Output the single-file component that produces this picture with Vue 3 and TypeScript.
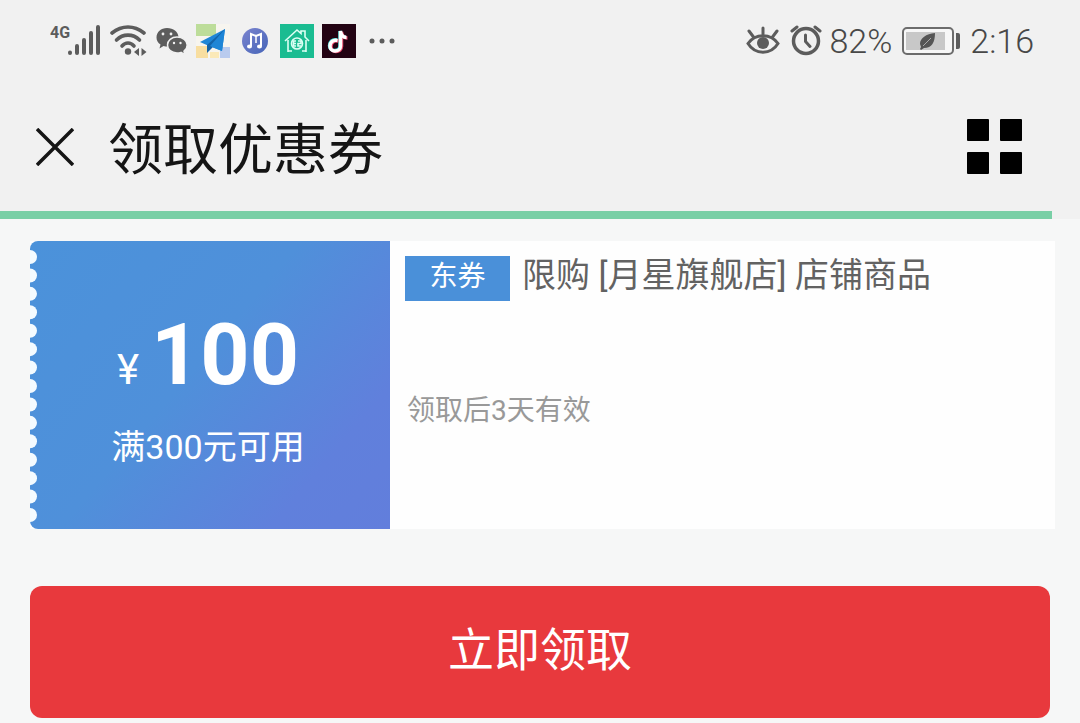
<script setup lang="ts">
interface Coupon {
  amount: number
  condition: string
  tag: string
  scope: string
  validity: string
}

const coupon: Coupon = {
  amount: 100,
  condition: '满300元可用',
  tag: '东券',
  scope: '限购 [月星旗舰店] 店铺商品',
  validity: '领取后3天有效',
}

const notchCount = 15
const notches: number[] = Array.from(
  { length: notchCount },
  (_, i) => 16 + (i * 258) / (notchCount - 1),
)
</script>

<template>
  <div class="page">
    <header class="top">
      <div class="status">
        <div class="status-left">
          <svg width="52" height="36" viewBox="0 0 52 36" aria-hidden="true">
            <text x="0" y="15" class="net">4G</text>
            <g stroke="#5c5c5c" stroke-width="4" stroke-linecap="round">
              <path d="M20 29.500v.5M27 23v7M34 17v13M41 10v20M48 4v26" />
            </g>
          </svg>
          <svg class="wifi" width="38" height="36" viewBox="0 0 38 36" fill="none" stroke="#5c5c5c" stroke-width="3.600" stroke-linecap="round" aria-hidden="true">
            <path d="M2 10C12 2 24 2 34 10" />
            <path d="M6.500 17C13 10.500 23 10.500 29.500 17" />
            <path d="M12 23C15.500 19 20.500 19 24 23" />
            <circle cx="18" cy="28.500" r="3.200" fill="#5c5c5c" stroke="none" />
            <path d="M29 25v8l-5-4zM31.500 25v8l5-4z" fill="#5c5c5c" stroke="none" />
          </svg>
          <svg class="wechat" width="32" height="36" viewBox="0 2 32 36" aria-hidden="true">
            <path d="M11 7C5 7 .5 11 .5 16.500c0 3 1.500 5.500 4 7l-1 4 4-2.500c2 .5 4 .7 6 .4C22 25 23 21 22.500 16 22 10.500 17.500 7 11 7z" fill="#5c5c5c" />
            <path d="M21 16c-5.500 0-9.500 3.500-9.500 8s4 8 9.500 8c1.500 0 2.800-.2 4-.6l4 2.300-1-3.500c2-1.500 3.200-3.600 3.200-6.200 0-4.500-4.500-8-10.200-8z" fill="#5c5c5c" stroke="#f1f1f1" stroke-width="1.500" />
            <g fill="#f1f1f1">
              <circle cx="7" cy="13" r="1.400" /><circle cx="15" cy="13" r="1.400" />
              <circle cx="18" cy="22" r="1.200" /><circle cx="24.500" cy="22" r="1.200" />
            </g>
          </svg>
          <svg class="app" width="34" height="34" viewBox="0 0 34 34" aria-hidden="true">
            <path fill="#f7f5ef" d="M0 0h34v34H0z" />
            <path fill="#bddd9a" d="M0 0h20v12H0z" />
            <path fill="#f8dea0" d="M0 22h12v12H0z" />
            <path fill="#b9cbee" d="M24 23h10v11H24z" />
            <path fill="#fbe9b8" d="M14 28h9v6h-9z" />
            <path fill="#1f86d6" d="M29 5L4 18l9 4 13 5z" />
            <path fill="#1463a8" d="M29 5L11 21v8l5-5z" />
            <path fill="#1f86d6" d="M29 5L14 22l12 5z" />
          </svg>
          <svg class="music" width="26" height="34" viewBox="0 0 26 34" aria-hidden="true">
            <defs>
              <linearGradient id="musicFill" x1="0" y1="0" x2="1" y2="1">
                <stop offset="0" stop-color="#7b84cf" />
                <stop offset="1" stop-color="#4665b8" />
              </linearGradient>
            </defs>
            <circle cx="13" cy="17" r="13" fill="url(#musicFill)" />
            <path d="M9 22V10l5 2 5-2v12" fill="none" stroke="#fff" stroke-width="2" />
            <path d="M14 12v7" stroke="#fff" stroke-width="1.500" />
            <ellipse cx="7.500" cy="22.500" rx="2.500" ry="2" fill="#fff" />
            <ellipse cx="17.500" cy="22.500" rx="2.500" ry="2" fill="#fff" />
          </svg>
          <svg class="app" width="34" height="34" viewBox="0 0 34 34" aria-hidden="true">
            <path fill="#1abc91" d="M0 0h34v34H0z" />
            <g fill="none" stroke="#dcfff4" stroke-width="1.600">
              <path d="M5 17L17 6l4 3.500V7h4v6l4 4M8 16v12M26 16v12M8 27h4M22 27h4" />
              <circle cx="17" cy="19.500" r="5.500" />
              <path d="M16 17h-2.500v5H16M13.500 19.500H16M18 17h3v2.500h-3v2.500h3" />
            </g>
          </svg>
          <svg class="app" width="34" height="34" viewBox="0 0 34 34" aria-hidden="true">
            <path fill="#230313" d="M0 0h34v34H0z" />
            <g fill="none" stroke-width="3.500">
              <path stroke="#39d9d6" d="M15 16c-5-1-7.500 2-7.500 5.500 0 3 2 5 5 5s5.500-2 5.500-5V7c.5 4 3 6 6 6" />
              <path stroke="#e8476b" d="M16.500 17c-5-1-7.500 2-7.500 5.500 0 3 2 5 5 5s5.500-2 5.500-5V8c.5 4 3 6 6 6" />
              <path stroke="#fff" d="M15.500 16.500c-5-1-7.500 2-7.500 5.500 0 3 2 5 5 5s5.500-2 5.500-5V7c.5 4 3 6.500 6 6.500" />
            </g>
          </svg>
          <svg class="dots" width="28" height="34" viewBox="0 0 28 34" fill="#5c5c5c" aria-hidden="true">
            <circle cx="3" cy="17" r="2.500" /><circle cx="13" cy="17" r="2.500" /><circle cx="23" cy="17" r="2.500" />
          </svg>
        </div>
        <div class="status-right">
          <svg width="34" height="36" viewBox="0 0 34 36" fill="none" stroke="#5c5c5c" stroke-width="3" stroke-linecap="round" aria-hidden="true">
            <path d="M2 20.500C9 10 25 10 32 20.500 25 32 9 32 2 20.500z" />
            <circle cx="17" cy="20" r="6" fill="#5c5c5c" stroke="none" />
            <path d="M17 11V5M7.500 14L3 8M26.500 14L31 8" />
          </svg>
          <svg class="alarm" width="32" height="36" viewBox="0 0 32 36" fill="none" stroke="#5c5c5c" stroke-width="3" stroke-linecap="round" aria-hidden="true">
            <circle cx="16" cy="18" r="12.500" stroke-width="3.500" />
            <path d="M15.500 12v6.500l4.500 5M2 8l5-4M30 8l-5-4" />
          </svg>
          <span class="percent">82%</span>
          <svg class="battery" width="58" height="30" viewBox="0 0 58 30" aria-hidden="true">
            <rect x="1" y="2" width="50" height="26" rx="4" fill="#f7f7f7" stroke="#6c6c6c" stroke-width="2" />
            <path fill="#c8c8c8" d="M4 6h39v18H4z" />
            <path fill="#555" d="M33 7c-9 1-15 5-15 11l1 3-1 2 1 1 3-2c8 0 11-6 11-15z" />
            <path d="M21 20l8-8" stroke="#aaa" stroke-width="1" />
            <path fill="#5c5c5c" d="M54 7h2q2 0 2 2v12q0 2-2 2h-2z" />
          </svg>
          <time class="clock">2:16</time>
        </div>
      </div>

      <nav class="bar">
        <button class="icon-button" type="button" aria-label="关闭">
          <svg width="38" height="38" viewBox="0 0 38 38" stroke="#151515" stroke-width="3.500" aria-hidden="true">
            <path d="M1 1l36 36M37 1L1 37" />
          </svg>
        </button>
        <h1 class="title">领取优惠券</h1>
        <button class="icon-button" type="button" aria-label="更多">
          <svg width="56" height="56" viewBox="0 0 56 56" aria-hidden="true">
            <rect width="22" height="22" rx="1" /><rect x="33" width="22" height="22" rx="1" />
            <rect y="33" width="22" height="22" rx="1" /><rect x="33" y="33" width="22" height="22" rx="1" />
          </svg>
        </button>
      </nav>
      <div class="progress"></div>
    </header>

    <main class="content">
      <article class="coupon">
        <section class="value">
          <svg class="notches" width="10" height="288" viewBox="0 0 10 288" fill="#f4fbff" aria-hidden="true">
            <circle v-for="cy in notches" :key="cy" cx="0" :cy="cy" r="7" />
          </svg>
          <p class="price"><span class="currency">¥</span><strong class="amount">{{ coupon.amount }}</strong></p>
          <p class="condition">{{ coupon.condition }}</p>
        </section>
        <section class="detail">
          <h2 class="scope"><span class="tag">{{ coupon.tag }}</span><span>{{ coupon.scope }}</span></h2>
          <p class="validity">{{ coupon.validity }}</p>
        </section>
      </article>
      <button class="claim" type="button">立即领取</button>
    </main>
  </div>
</template>

<style>
body {
  background: #f6f7f7;
}
</style>

<style scoped>
.page {
  font-family: Roboto, "Noto Sans CJK SC", sans-serif;
  color: #626262;
}
h1,
h2,
p {
  margin: 0;
  font-weight: 400;
}
svg {
  display: block;
  flex: none;
}
.top {
  background: #f1f1f1;
}
.status {
  display: flex;
  justify-content: space-between;
  align-items: center;
  height: 82px;
  padding: 0 46px 0 50px;
}
.status-left,
.status-right {
  display: flex;
  align-items: center;
}
.net {
  font: 700 16px Roboto, sans-serif;
  fill: #5c5c5c;
}
.wifi,
.wechat,
.app {
  margin-left: 8px;
}
.music {
  margin: 0 4px 0 12px;
}
.dots {
  margin-left: 13px;
}
.alarm {
  margin: 0 7px 0 10px;
}
.percent,
.clock {
  font-size: 34px;
  line-height: 40px;
  font-weight: 300;
  color: #484848;
}
.battery {
  margin: 0 10px;
}
.bar {
  display: flex;
  align-items: center;
  height: 129px;
  padding: 0 57px 0 36px;
}
.icon-button {
  display: block;
  padding: 0;
  border: 0;
  background: none;
}
.title {
  flex: 1;
  padding: 6px 0 0 34px;
  font-size: 55px;
  line-height: 80px;
  color: #151515;
}
.progress {
  height: 8px;
  margin-right: 28px;
  background: #79cfa6;
}
.content {
  padding: 22px 30px 5px;
}
.coupon {
  display: flex;
  margin-right: -5px;
  background: #fefefe;
}
.value {
  position: relative;
  display: flex;
  flex: 0 0 360px;
  flex-direction: column;
  align-items: center;
  height: 288px;
  box-sizing: border-box;
  padding: 62px 4px 0 0;
  border-radius: 8px 0 0 8px;
  background: linear-gradient(130deg, #4b92da 0%, #4f90da 45%, #6080dc 80%, #627edc 100%);
  color: #fff;
}
.notches {
  position: absolute;
  top: 0;
  left: 0;
}
.price {
  display: flex;
  align-items: baseline;
  gap: 12px;
  line-height: 104px;
}
.currency {
  font-size: 42px;
}
.amount {
  font-size: 86px;
  font-weight: 700;
}
.condition {
  font-size: 34px;
  line-height: 50px;
}
.detail {
  flex: 1;
  padding: 9px 15px;
}
.scope {
  display: flex;
  align-items: flex-start;
  gap: 12px;
  font-size: 34px;
  line-height: 50px;
}
.tag {
  flex: none;
  width: 105px;
  margin-top: 6px;
  background: #4a90d9;
  color: #fff;
  font-size: 28px;
  line-height: 42px;
  padding-bottom: 3px;
  text-align: center;
}
.validity {
  padding: 90px 0 0 2px;
  font-size: 28px;
  line-height: 40px;
  color: #999;
}
.claim {
  display: block;
  width: 100%;
  height: 132px;
  margin-top: 57px;
  padding: 0 0 12px;
  border: 0;
  border-radius: 12px;
  background: #e8393d;
  color: #fff;
  font: inherit;
  font-size: 46px;
}
</style>
